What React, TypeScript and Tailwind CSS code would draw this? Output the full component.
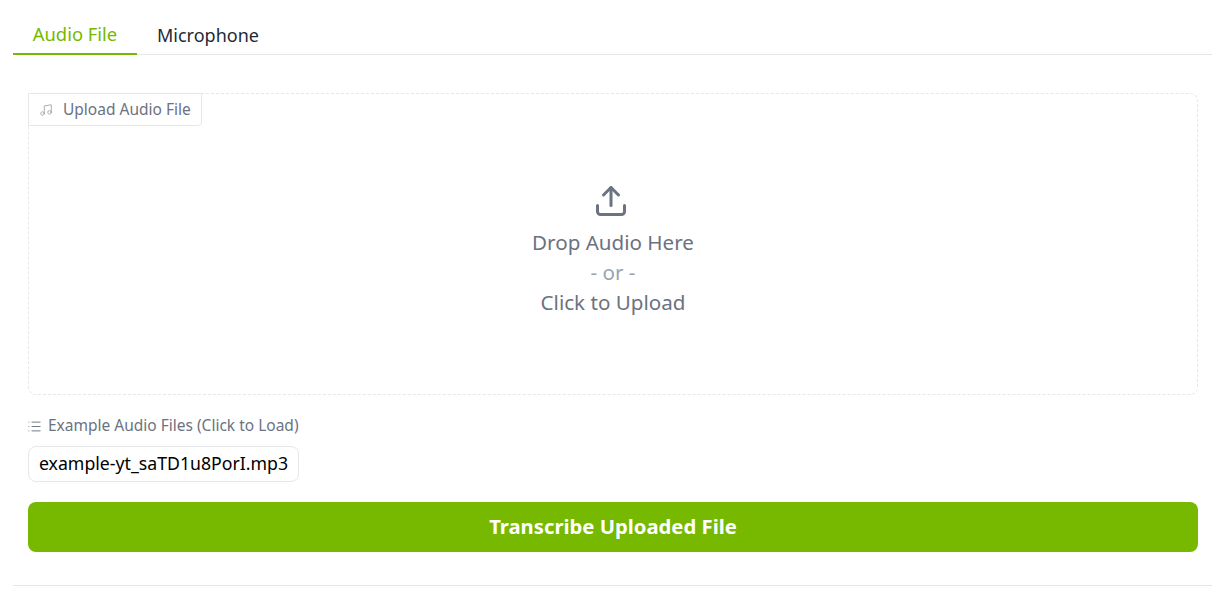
import { Upload, Music, List } from 'lucide-react'

const font = { fontFamily: '"Noto Sans", "Open Sans", sans-serif' }

export default function App() {
  return (
    <div className="min-h-[592px] bg-white pl-[13px] pr-[11px]" style={font}>
      {/* Tabs */}
      <div className="flex h-[55px] items-end border-b border-gray-200">
        <button className="-mb-px h-[36px] w-[124px] border-b-2 border-[#76b900] pb-[4px] text-[18.4px] leading-[24px] text-[#76b900]">
          Audio File
        </button>
        <button className="-mb-px h-[36px] px-5 pb-[4px] text-[18px] leading-[24px] text-[#1f2937]">
          Microphone
        </button>
      </div>

      <div className="flex flex-col pl-[15px] pr-[14px] pt-[38px] pb-[33px]">
        {/* Drop zone */}
        <div className="relative flex h-[302px] flex-col items-center justify-center rounded-lg border border-dashed border-gray-200 pt-[12px]">
          <div className="absolute -left-px -top-px flex h-[33px] w-[174px] items-center gap-[10px] rounded-br-[4px] border border-gray-200 bg-white pl-[10px] text-[15.5px] text-[#6b7280]">
            <Music size={14} strokeWidth={1.5} className="text-[#9ca3af]" />
            Upload Audio File
          </div>
          <Upload size={36} strokeWidth={2} className="mr-[4px] text-[#6b7280]" />
          <div className="mt-[8px] text-[20.6px] leading-[30px] text-[#6b7280]">Drop Audio Here</div>
          <div className="text-[20.6px] leading-[30px] text-[#9ca3af]">- or -</div>
          <div className="text-[20.6px] leading-[30px] text-[#6b7280]">Click to Upload</div>
        </div>

        {/* Examples */}
        <div className="mt-[21px] flex h-[20px] items-center gap-[5px] text-[15.5px] text-[#6b7280]">
          <List size={15} strokeWidth={1.5} className="-ml-px mr-px" />
          Example Audio Files (Click to Load)
        </div>
        <button className="mt-[10px] h-[36px] w-[271px] rounded-lg border border-gray-200 bg-white pb-[2px] text-[17.7px] text-black">
          example-yt_saTD1u8PorI.mp3
        </button>

        <button className="mt-[20px] h-[50px] w-full rounded-lg bg-[#76b900] pb-[2px] text-[20.25px] font-bold text-white">
          Transcribe Uploaded File
        </button>
      </div>

      <div className="border-t border-gray-200" />
    </div>
  )
}
